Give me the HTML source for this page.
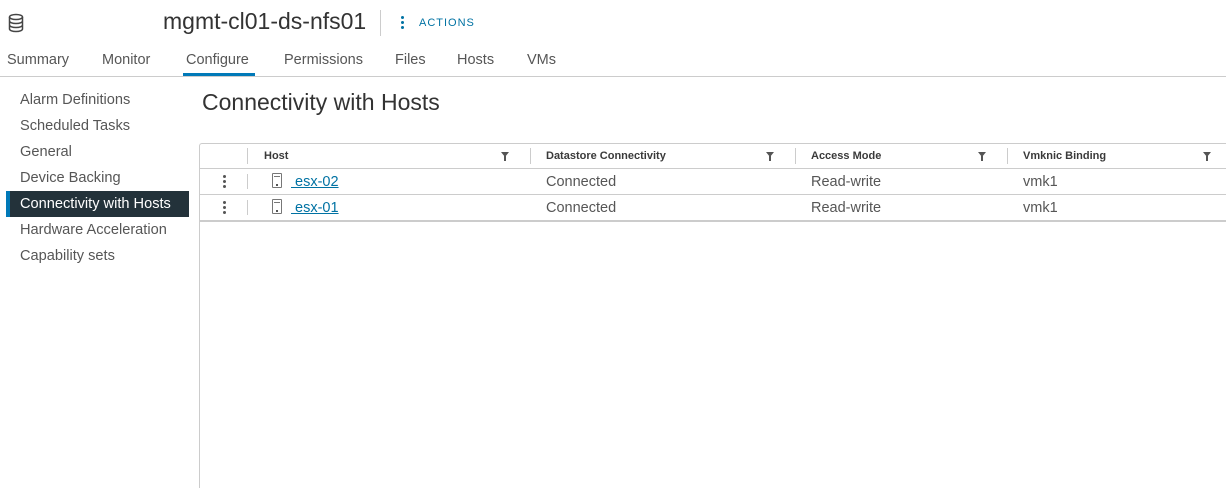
<!DOCTYPE html>
<html><head><style>
*{margin:0;padding:0;box-sizing:border-box}
body{width:1226px;height:488px;overflow:hidden;background:#fff;font-family:"Liberation Sans",sans-serif;color:#565656;position:relative}
.a{position:absolute;white-space:nowrap}
.tab{position:absolute;top:52px;font-size:14.5px;color:#565656}
.side{position:absolute;left:20px;font-size:14.6px;color:#565656}
.th{position:absolute;top:150px;font-size:11px;font-weight:bold;color:#3a3a3a}
.td{position:absolute;font-size:14.5px;color:#565656}
.vl{position:absolute;width:1px;background:#ccc}
.hl{position:absolute;height:1px;background:#ccc}
.filt{position:absolute;top:152px;width:0;height:0;border-left:4px solid transparent;border-right:4px solid transparent;border-top:5px solid #555}
.filt:after{content:"";position:absolute;left:-1px;top:-1px;width:2px;height:5px;background:#555}
.dots{position:absolute;left:223px;width:3px}
.dots i{display:block;width:3px;height:3px;background:#555;border-radius:50%;margin-bottom:2px}
.srv{position:absolute;left:272px;width:10px;height:15px;border:1.5px solid #777;border-radius:1px}
.srv:before{content:"";position:absolute;left:1px;right:1px;top:2px;height:1px;background:#777}
.srv:after{content:"";position:absolute;left:3px;bottom:1px;width:2px;height:2px;background:#555}
a{color:#0072a3;text-decoration:underline}
</style></head><body>
<svg class="a" style="left:8px;top:13px" width="16" height="20" viewBox="0 0 16 20"><g fill="none" stroke="#444" stroke-width="1.5"><ellipse cx="8" cy="4" rx="6.5" ry="2.5"/><path d="M1.5 4v12c0 1.4 2.9 2.5 6.5 2.5s6.5-1.1 6.5-2.5V4M1.5 8c0 1.4 2.9 2.5 6.5 2.5s6.5-1.1 6.5-2.5M1.5 12c0 1.4 2.9 2.5 6.5 2.5s6.5-1.1 6.5-2.5"/></g></svg>
<div class="a" style="left:163px;top:8px;font-size:23px;color:#333">mgmt-cl01-ds-nfs01</div>
<div class="a" style="left:380px;top:10px;width:1px;height:26px;background:#ccc"></div>
<div class="a" style="left:401px;top:16px;width:3px"><i style="display:block;width:3px;height:3px;background:#0072a3;border-radius:50%;margin-bottom:2px"></i><i style="display:block;width:3px;height:3px;background:#0072a3;border-radius:50%;margin-bottom:2px"></i><i style="display:block;width:3px;height:3px;background:#0072a3;border-radius:50%"></i></div>
<div class="a" style="left:419px;top:17px;font-size:11px;letter-spacing:1px;color:#0072a3">ACTIONS</div>
<div class="tab" style="left:7px">Summary</div>
<div class="tab" style="left:102px">Monitor</div>
<div class="tab" style="left:186px">Configure</div>
<div class="tab" style="left:284px">Permissions</div>
<div class="tab" style="left:395px">Files</div>
<div class="tab" style="left:457px">Hosts</div>
<div class="tab" style="left:527px">VMs</div>
<div class="a" style="left:0;top:76px;width:1226px;height:1px;background:#ccc"></div>
<div class="a" style="left:183px;top:73px;width:72px;height:3px;background:#0079b8"></div>
<div class="side" style="top:92px">Alarm Definitions</div>
<div class="side" style="top:118px">Scheduled Tasks</div>
<div class="side" style="top:144px">General</div>
<div class="side" style="top:170px">Device Backing</div>
<div class="a" style="left:6px;top:191px;width:183px;height:26px;background:#23323a;border-left:4px solid #0079b8"></div>
<div class="side" style="top:196px;color:#fff">Connectivity with Hosts</div>
<div class="side" style="top:222px">Hardware Acceleration</div>
<div class="side" style="top:248px">Capability sets</div>
<div class="a" style="left:202px;top:89px;font-size:23px;color:#333">Connectivity with Hosts</div>
<div class="a" style="left:199px;top:143px;width:1027px;height:345px;border:1px solid #ccc;border-right:none;border-bottom:none;border-top-left-radius:3px"></div>
<div class="hl" style="left:200px;top:168px;width:1026px"></div>
<div class="hl" style="left:200px;top:194px;width:1026px"></div>
<div class="a" style="left:200px;top:220px;width:1026px;height:2px;background:#ccc"></div>
<div class="vl" style="left:247px;top:148px;height:16px"></div>
<div class="vl" style="left:530px;top:148px;height:16px"></div>
<div class="vl" style="left:795px;top:148px;height:16px"></div>
<div class="vl" style="left:1007px;top:148px;height:16px"></div>
<div class="vl" style="left:247px;top:174px;height:15px"></div>
<div class="vl" style="left:247px;top:200px;height:15px"></div>
<div class="th" style="left:264px">Host</div>
<div class="th" style="left:546px">Datastore Connectivity</div>
<div class="th" style="left:811px">Access Mode</div>
<div class="th" style="left:1023px">Vmknic Binding</div>
<div class="filt" style="left:501px"></div>
<div class="filt" style="left:766px"></div>
<div class="filt" style="left:978px"></div>
<div class="filt" style="left:1203px"></div>
<div class="dots" style="top:175px"><i></i><i></i><i></i></div>
<div class="dots" style="top:201px"><i></i><i></i><i></i></div>
<div class="srv" style="top:173px"></div>
<div class="srv" style="top:199px"></div>
<div class="td" style="left:291px;top:174px"><a>&nbsp;esx-02</a></div>
<div class="td" style="left:291px;top:200px"><a>&nbsp;esx-01</a></div>
<div class="td" style="left:546px;top:174px">Connected</div>
<div class="td" style="left:546px;top:200px">Connected</div>
<div class="td" style="left:811px;top:174px">Read-write</div>
<div class="td" style="left:811px;top:200px">Read-write</div>
<div class="td" style="left:1023px;top:174px">vmk1</div>
<div class="td" style="left:1023px;top:200px">vmk1</div>
</body></html>
